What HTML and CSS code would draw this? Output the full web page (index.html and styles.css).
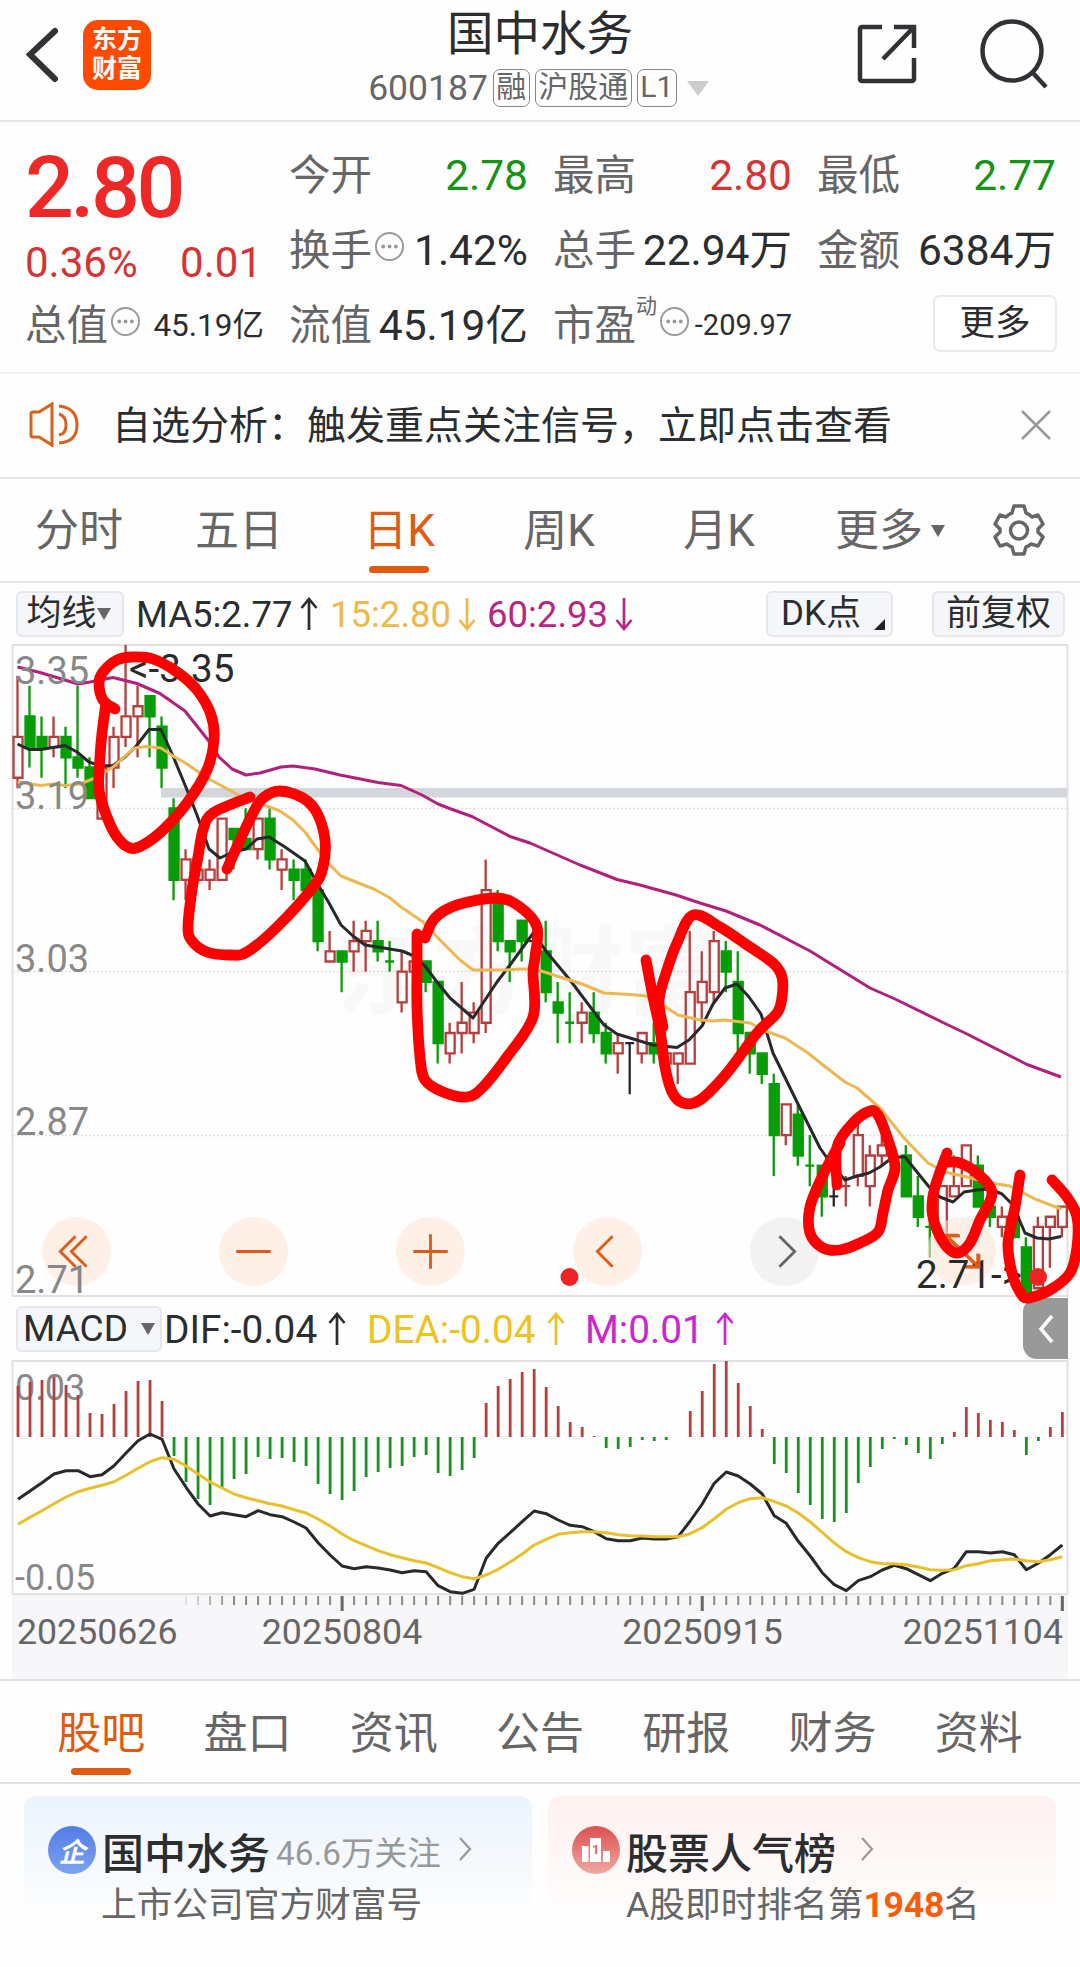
FILE: index.html
```html
<!DOCTYPE html>
<html lang="zh-CN">
<head>
<meta charset="utf-8">
<title>国中水务 600187</title>
<link rel="stylesheet" href="styles.css">
</head>
<body>
<header class="topbar">
  <svg class="back" width="36" height="58" viewBox="0 0 36 58"><path d="M31 5 6 28.500 31 53"/></svg>
  <div class="logo"><span>东方</span><span>财富</span></div>
  <div class="heading">
    <h1>国中水务</h1>
    <div class="code"><span class="num">600187</span><span class="tag">融</span><span class="tag">沪股通</span><span class="tag">L1</span><i class="tri tri-light"></i></div>
  </div>
  <svg class="share" width="62" height="62" viewBox="0 0 62 62"><path d="M25 4H5a2 2 0 0 0-2 2V56a2 2 0 0 0 2 2H55a2 2 0 0 0 2-2V35M37 4H57V25M57 4 26 36"/></svg>
  <svg class="search" width="70" height="74" viewBox="0 0 70 74"><circle cx="33" cy="34" r="29.500"/><path d="M53 55 67 70"/></svg>
</header>

<section class="quote">
  <div class="cell price">2.80</div>
  <div class="cell"><span class="label">今开</span><b class="down">2.78</b></div>
  <div class="cell"><span class="label">最高</span><b class="up">2.80</b></div>
  <div class="cell"><span class="label">最低</span><b class="down">2.77</b></div>
  <div class="cell change up"><span>0.36%</span><span>0.01</span></div>
  <div class="cell"><span class="label">换手<svg class="dots" viewBox="0 0 32 32"><circle class="ring" cx="16" cy="16" r="14"/><circle cx="9.5" cy="16" r="2"/><circle cx="16" cy="16" r="2"/><circle cx="22.5" cy="16" r="2"/></svg></span><b>1.42%</b></div>
  <div class="cell"><span class="label">总手</span><b>22.94万</b></div>
  <div class="cell"><span class="label">金额</span><b>6384万</b></div>
  <div class="cell"><span class="label">总值<svg class="dots" viewBox="0 0 32 32"><circle class="ring" cx="16" cy="16" r="14"/><circle cx="9.5" cy="16" r="2"/><circle cx="16" cy="16" r="2"/><circle cx="22.5" cy="16" r="2"/></svg></span><b class="small">45.19亿</b></div>
  <div class="cell"><span class="label">流值</span><b>45.19亿</b></div>
  <div class="cell"><span class="label">市盈<sup>动</sup><svg class="dots" viewBox="0 0 32 32"><circle class="ring" cx="16" cy="16" r="14"/><circle cx="9.5" cy="16" r="2"/><circle cx="16" cy="16" r="2"/><circle cx="22.5" cy="16" r="2"/></svg></span><b class="small ratio">-209.97</b></div>
  <div class="cell last"><button class="more">更多</button></div>
</section>

<section class="notice">
  <svg class="speaker" width="54" height="46" viewBox="0 0 54 46"><path d="M3 12Q3 10 5 10H11L24 2V43L11 35H5Q3 35 3 33ZM31 12Q38 14 38 23T31 33M31 4Q49 6 49 23T31 41"/></svg>
  <p>自选分析：触发重点关注信号，立即点击查看</p>
  <svg class="close" width="32" height="32" viewBox="0 0 32 32"><path d="M2 2 30 30M30 2 2 30"/></svg>
</section>

<nav class="periods">
  <span>分时</span><span>五日</span><span class="on">日K</span><span>周K</span><span>月K</span><span class="wide">更多<i class="tri"></i></span>
  <svg class="gear" width="54" height="54" viewBox="0 0 54 54"><path d="M22 3H32L34 10Q37 11 40 14L46 12 51 21 46 26V29L51 34 46 43 39 41Q37 43 34 44L32 51H22L20 44Q17 43 15 41L8 43 3 34 8 29V26L3 21 8 12 14 14Q17 11 20 10Z"/><circle cx="27" cy="27.500" r="8.500"/></svg>
</nav>

<section class="indicator">
  <span class="chip ma">均线<i class="tri"></i></span>
  <span class="val ma5">MA5:2.77<svg class="arrow" viewBox="0 0 18 34"><path d="M9 33V2M1.500 11 9 2 16.500 11"/></svg></span>
  <span class="val ma15">15:2.80<svg class="arrow" viewBox="0 0 18 34"><path d="M9 1V32M1.500 23 9 32 16.500 23"/></svg></span>
  <span class="val ma60">60:2.93<svg class="arrow" viewBox="0 0 18 34"><path d="M9 1V32M1.500 23 9 32 16.500 23"/></svg></span>
  <span class="chip dk">DK点<i class="corner"></i></span>
  <span class="chip adj">前复权</span>
</section>

<section class="kline">
  <svg class="plot" width="1080" height="654" viewBox="0 643 1080 654">
    <rect class="frame" x="12.500" y="645" width="1055" height="651"/>
    <text class="watermark" x="336" y="1006">东方财富</text>
    <path class="grid" d="M13 808.500H1067M13 971.500H1067M13 1135.500H1067"/>
    <rect class="gap-band" x="161" y="788" width="906" height="9.500"/>
    <g id="candles"></g>
    <polyline class="line-60" points="17.500,667 40,672.500 78,684 90,682 113,677.500 137,683.500 160,693.500 185,711 208,740 219,757 232,769 246,775 260,773 281,767 293,766 315,769 340,775 378,782.500 401,785.500 422,795 438,804 451,809 472,816.500 510,836.500 530,843 580,865 617,879.500 640,885 676,895 700,903 726,911 760,925 810,951 870,988 895,999 946,1024 965,1033 1027,1064.500 1061,1077"/>
    <polyline class="line-5" points="17.500,744 29,749.500 41,749.500 65,745.500 77,752 89,762 101,766 113,765.500 125,757 137,745 149,729.500 161,729.500 173,756 185,785 197,815 209,849 220,858 233,852 246,849 257,839 269,837 285,847 305,861 317,883 329,903 341,925 353,936 365,945 402,951 414,956 425,966 437,982 450,998 473,1018 485,1000 497,982 510,965 534,932 545,950 570,980 582,996 604,1025 617,1034 653,1045 677,1047.500 689,1040 702,1026 713,1004 725,988 737,984 749,997 761,1014 773,1053 797,1102 820,1148 832,1165 845,1180 857,1176 869,1173 880,1167 893,1157 905,1157 917,1172 930,1188 940,1197 953,1202 964,1192 977,1190 990,1189 1002,1194 1013,1205 1025,1233 1037,1238 1049,1239 1061,1236.500"/>
    <polyline class="line-15" points="17.500,782 41,785.500 53,784 65,785.500 80,784 95,778 113,767 134,748 146,746.500 161,748 173,756 187,764 207,778 222,786 240,796 280,811 293,820 305,832 318,850 330,865 341,876 361,884 374,889 390,898 401,907 423,922 440,940 460,960 473,970 505,970 520,969 535,969 560,977 582,984 604,993 630,994.500 646,996 664,1006 678,1015 700,1020 713,1021 725,1020 750,1023 768,1032 785,1038 808,1053 823,1065 845,1082 857,1088 880,1108 904,1138 928,1163 945,1172 967,1177 990,1183 1010,1186 1035,1199 1061,1209"/>
    <g class="scale"><text x="15" y="683.500">3.35</text><text x="15" y="808.500">3.19</text><text x="15" y="971.500">3.03</text><text x="15" y="1134.500">2.87</text></g>
    <text class="extreme" x="129" y="681.500">&lt;-3.35</text>
  </svg>
  <div class="controls">
    <span class="knob"><svg viewBox="0 0 68 68"><path d="M33 19 18 34 33 49M44 19 29 34 44 49"/></svg></span>
    <span class="knob"><svg viewBox="0 0 68 68"><path d="M17 34H51"/></svg></span>
    <span class="knob"><svg viewBox="0 0 68 68"><path d="M17 34H51M34 17V51"/></svg></span>
    <span class="knob"><svg viewBox="0 0 68 68"><path d="M39 19 24 34 39 49"/></svg></span>
    <span class="knob off"><svg viewBox="0 0 68 68"><path d="M29 19 44 34 29 49"/></svg></span>
    <span class="knob"><svg viewBox="0 0 68 68"><path d="M18 30V18H31M18 18 50 49M50 36V49H37"/></svg></span>
  </div>
  <svg class="marks" width="1080" height="654" viewBox="0 643 1080 654">
    <g class="scale"><text x="15" y="1293">2.71</text></g>
    <text class="extreme" x="916" y="1288">2.71-&gt;</text>
    <path class="resize" d="M947 1248V1236H960M947 1236 979 1267M979 1254V1267H966"/>
    <circle cx="569.500" cy="1277" r="9"/><circle cx="1038" cy="1277" r="9"/>
    <g id="strokes"></g>
  </svg>
</section>

<section class="indicator macd-bar">
  <span class="chip macd">MACD<i class="tri"></i></span>
  <span class="val dif">DIF:-0.04<svg class="arrow" viewBox="0 0 18 34"><path d="M9 33V2M1.500 11 9 2 16.500 11"/></svg></span>
  <span class="val dea">DEA:-0.04<svg class="arrow" viewBox="0 0 18 34"><path d="M9 33V2M1.500 11 9 2 16.500 11"/></svg></span>
  <span class="val m">M:0.01<svg class="arrow" viewBox="0 0 18 34"><path d="M9 33V2M1.500 11 9 2 16.500 11"/></svg></span>
  <span class="drawer"><svg width="18" height="30" viewBox="0 0 18 30"><path d="M15 2 4 15 15 28"/></svg></span>
</section>

<section class="macd-plot">
  <svg width="1080" height="319" viewBox="0 1360 1080 319">
    <rect class="axis-bg" x="12" y="1595" width="1056" height="84"/>
    <rect class="frame" x="12.500" y="1361" width="1055" height="233"/>
    <g class="scale macd-scale"><text x="15" y="1399.500">0.03</text><text x="15" y="1590">-0.05</text></g>
    <g id="histogram"></g>
    <polyline id="dif" class="line-5"/>
    <polyline id="dea" class="line-dea"/>
    <g id="ticks"></g>
    <g class="dates"><text x="17" y="1644">20250626</text><text x="342" y="1644" text-anchor="middle">20250804</text><text x="702.500" y="1644" text-anchor="middle">20250915</text><text x="1063" y="1644" text-anchor="end">20251104</text></g>
  </svg>
</section>

<nav class="sections"><span class="on">股吧</span><span>盘口</span><span>资讯</span><span>公告</span><span>研报</span><span>财务</span><span>资料</span></nav>

<section class="cards">
  <article class="card blue">
    <span class="badge">企</span>
    <div class="line"><strong>国中水务</strong><small>46.6万关注</small><svg width="14" height="24" viewBox="0 0 14 24"><path d="M2 1 12 12 2 23"/></svg></div>
    <p>上市公司官方财富号</p>
  </article>
  <article class="card pink">
    <span class="badge"><svg width="30" height="26" viewBox="0 0 30 26"><path d="M1 9H7.500V25H1ZM9 1H20V25H9ZM22 14H29V25H22Z"/><text x="11" y="17">1</text></svg></span>
    <div class="line"><strong>股票人气榜</strong><svg class="far" width="14" height="24" viewBox="0 0 14 24"><path d="M2 1 12 12 2 23"/></svg></div>
    <p>A股即时排名第<b>1948</b>名</p>
  </article>
</section>
<script src="chart.js"></script>
</body>
</html>
```
FILE: styles.css
```css
* { box-sizing: border-box; }
body { margin: 0; width: 1080px; height: 1967px; overflow: hidden; background: #fefefe; color: #2b2d2f; font-family: Roboto, "Noto Sans CJK SC", sans-serif; }
h1, p { margin: 0; font-weight: 400; }
svg { display: block; fill: none; flex: none; }
b { font-weight: 400; }
.tri { display: inline-block; border: 7px solid transparent; border-top: 12px solid #666; border-bottom: 0; }
.tri-light { border-width: 15px 11px 0; border-top-color: #ccc; }

.topbar { display: flex; height: 122px; border-bottom: 2px solid #e5e6e8; padding-left: 24px; }
.topbar svg { stroke: #303235; stroke-width: 4.5; }
.topbar .back { margin-top: 26px; stroke-width: 6; stroke-linecap: round; }
.logo { display: flex; flex-direction: column; align-items: center; justify-content: center; width: 68px; height: 70px; margin: 20px 0 0 23px; border-radius: 15px; background: #ff4a00; color: #fff; font-size: 25px; line-height: 29px; font-weight: 700; padding-bottom: 2px; }
.heading { width: 564px; margin-left: 107px; display: flex; flex-direction: column; align-items: center; }
.heading h1 { font-size: 46.500px; line-height: 68px; }
.code { display: flex; align-items: center; height: 40px; margin-left: -3px; color: #666; font-size: 30px; }
.code .num { font-size: 35.500px; margin-right: 5px; }
.tag { border: 1.500px solid #888; border-radius: 7px; height: 38px; line-height: 34px; padding: 0 2.500px; margin-right: 5px; }
.code .tri { margin-left: 5px; }
.share { margin: 23px 0 0 35px; }
.search { margin: 17px 0 0 60px; }

.quote { display: grid; grid-template-columns: repeat(4, 238px); gap: 0 26px; grid-auto-rows: 75px; height: 252px; padding: 15px 25px 0; border-bottom: 2px solid #f0f0f2; }
.cell { display: flex; align-items: center; justify-content: space-between; font-size: 42.500px; white-space: nowrap; line-height: 75px; padding-top: 1px; }
.cell > b { margin-right: -1px; }
.label { display: flex; align-items: center; color: #666; font-size: 41.500px; }
.label sup { align-self: flex-start; font-size: 21px; line-height: 37px; width: 21px; }
.dots { width: 31px; height: 31px; margin: -8px 0 0 2px; fill: #999; }
.ring { fill: none; stroke: #999; stroke-width: 2; }
.small { font-size: 31.500px; }
.cell > .ratio { margin-right: -1px; font-size: 29px; }
.up { color: #d63434; }
.down { color: #149414; }
.price { color: #ee2727; font-size: 86px; font-weight: 500; letter-spacing: -3.400px; padding-top: 25px; }
.change { font-size: 42px; padding: 25px 1px 0 0; }
.last { justify-content: flex-end; }
.more { width: 124px; height: 57px; margin: -4px -2px 0 0; border: 2px solid #e8eaed; border-radius: 7px; background: #fff; color: inherit; font: 35.500px/47px Roboto, "Noto Sans CJK SC", sans-serif; padding: 0; }

.notice { display: flex; align-items: center; height: 105px; padding-left: 28px; border-bottom: 2px solid #e7e8ea; }
.speaker { stroke: #d9601e; stroke-width: 3; margin-top: -2px; }
.notice p { width: 908px; margin: -8px 0 0 30px; font-size: 39px; }
.close { stroke: #999; stroke-width: 2.500; margin-top: -2px; }

.periods { display: flex; align-items: center; height: 104px; color: #666; font-size: 44px; border-bottom: 2px solid #e5e6e8; }
.periods span { position: relative; left: -1px; width: 160px; text-align: center; line-height: 106px; top: 1px; }
.periods .wide { width: 182px; padding-left: 0; }
.periods .tri { margin: 0 0 9px 8px; }
.on { color: #e05a10; }
.on::after { content: ""; position: absolute; left: calc(50% - 30px); bottom: 7px; width: 60px; height: 7px; border-radius: 4px; background: #e05a10; }
.periods .on::after { bottom: 11px; }
.gear { margin-left: 10px; stroke: #666; stroke-width: 3.500; stroke-linejoin: round; }

.indicator { display: flex; align-items: center; height: 60px; padding: 1px 0 0 16px; font-size: 36.500px; white-space: nowrap; }
.chip { display: flex; align-items: center; justify-content: center; height: 46px; font-size: 35px; line-height: 36px; padding-bottom: 0; background: #f5f6f9; border: 2px solid #e5e7eb; border-radius: 6px; position: relative; }
.val { display: flex; align-items: center; padding-top: 1px; }
.arrow { width: 18px; height: 34px; stroke: currentColor; stroke-width: 2.700; margin-left: 7px; }
.chip.ma { width: 108px; padding-right: 3px; }
.ma5 { width: 194px; margin-left: 12px; }
.ma15 { width: 157px; color: #efb94a; }
.ma60 { width: 279px; color: #b82681; }
.dk { width: 127px; padding-right: 17px; }
.corner { position: absolute; right: 6px; bottom: 5px; border-left: 11px solid transparent; border-bottom: 11px solid #222; }
.adj { width: 133px; margin-left: 39px; }

.kline { position: relative; height: 654px; }
.frame { stroke: #e2e2e4; stroke-width: 2; }
.watermark { font: 700 96px "Noto Sans CJK SC", sans-serif; fill: #f8f8f9; }
.grid { stroke: #dedede; stroke-width: 1.500; stroke-dasharray: 2 2; }
.gap-band { fill: #d3d6db; }
.line-5, .line-15, .line-60, .line-dea { stroke-width: 3; stroke-linejoin: round; fill: none; }
.line-5 { stroke: #28292b; }
.line-15 { stroke: #edb751; }
.line-60 { stroke: #b3207c; }
.line-dea { stroke: #e8c02c; }
.candle { stroke-width: 2.300; }
.candle.r { stroke: #b83e3d; fill: none; }
.candle.g { stroke: #069d06; fill: #069d06; }
.candle.k { stroke: #28292b; fill: none; }
.scale { font-size: 38px; fill: #888; }
.macd-scale { font-size: 36px; }
.extreme { font-size: 38.500px; fill: #292a2c; }
.controls { position: absolute; left: 42px; top: 574px; display: flex; gap: 108px; }
.knob { width: 69px; height: 69px; border-radius: 50%; background: rgba(255, 229, 214, 0.58); }
.knob svg, .resize { stroke: #dc5c18; stroke-width: 2.800; }
.knob.off { background: rgba(229, 229, 229, 0.5); }
.knob.off svg { stroke: #666; }
.marks { position: absolute; left: 0; top: 0; overflow: visible; z-index: 2; }
.marks circle { fill: #ee2424; }
.stroke { stroke: #fd0000; stroke-width: 10.800; stroke-linecap: round; stroke-linejoin: round; }

.macd-bar { height: 63px; padding-top: 0; font-size: 38.800px; }
.macd { width: 146px; font-size: 37px; }
.macd .tri { margin: 0 0 0 13px; }
.macd-bar .arrow { margin-left: 11px; }
.dif { width: 203px; margin-left: 2px; }
.dea { width: 218px; color: #ecc323; }
.m { width: 438px; color: #ce26ce; }
.macd-bar .m .arrow { margin-left: 12px; }
.drawer { display: flex; align-items: center; justify-content: center; width: 45px; height: 61px; border-radius: 14px 0 0 14px; background: #999; }
.drawer svg { stroke: #fff; stroke-width: 3.500; }
.macd-plot { height: 319px; }
.axis-bg { fill: #f7f7fa; }
.bar { stroke-width: 2.800; }
.bar.r { stroke: #b83e3d; }
.bar.g { stroke: #16941b; }
.tick { stroke: #888; stroke-width: 2; }
.tick.major { stroke: #666; stroke-width: 3; }
.dates { font-size: 35.700px; fill: #666; }

.sections { display: flex; height: 105px; padding: 0 28px; border-top: 2px solid #dfe0e2; border-bottom: 2px solid #dfe0e2; color: #666; font-size: 44px; }
.sections span { position: relative; flex: 1; text-align: center; line-height: 106px; }
.sections .on { color: #e05a10; }

.cards { display: flex; gap: 16px; padding: 12px 24px; }
.card { position: relative; width: 508px; height: 160px; border-radius: 12px; padding: 27px 0 0 78px; }
.blue { background: linear-gradient(#ebf4fd, #fefefe 78%); }
.pink { background: linear-gradient(#fff1f0, #fefefe 78%); }
.badge { position: absolute; left: 24px; top: 30px; width: 48px; height: 48px; border-radius: 50%; display: flex; align-items: center; justify-content: center; color: #fff; font: 700 27px "Noto Sans CJK SC", sans-serif; }
.blue .badge { background: linear-gradient(#527de8, #7ba4ee); font-style: italic; }
.pink .badge { background: linear-gradient(#dc4f50, #efaaa2); }
.badge path { fill: #fff; }
.badge text { fill: #dc6060; font: 700 13px Roboto, sans-serif; }
.line { display: flex; align-items: center; height: 60px; margin-top: -3px; }
.line strong { font-size: 42px; font-weight: 500; }
.line small { font-size: 33.300px; color: #999; margin-left: 6px; }
.line svg { stroke: #999; stroke-width: 2.200; margin: -2px 0 0 17px; }
.line svg.far { margin-left: 24px; }
.card p { font-size: 35.700px; line-height: 42px; margin: 4px 0 0 -1px; color: #666; white-space: nowrap; }
.card.pink p { margin-left: 0; }
.card p b { color: #f95d0c; font-weight: 700; letter-spacing: -0.300px; }
```
FILE: chart.js
```js
const NS = "http://www.w3.org/2000/svg";
const xAt = i => 17.5 + 12.004 * i;
const priceY = n => 645 + 10.21 * n;

function add(parent, tag, attrs) {
  const el = document.createElementNS(NS, tag);
  for (const k in attrs) el.setAttribute(k, attrs[k]);
  document.getElementById(parent).appendChild(el);
}

// Each candle: colour, then high, body top, body bottom, low, in cents below 3.35.
const candles = `r3,9,13,14 g4,7,10,12 g7,9,10,13 r7,9,10,11 g8,9,11,14 g4,11,12,13 g11,12,15,15 r12,12,17,17 r8,9,12,14 r0,7,9,10
r4,6,7,11 g5,5,7,11 g7,8,12,14 g15,16,23,25 r20,21,23,25 r22,22,23,23 r21,22,23,24 r17,17,23,23 g18,18,19,22 g16,19,20,20
r17,17,20,21 g16,17,21,22 r20,21,22,24 g21,22,23,25 g21,22,24,24 g24,24,29,30 r28,30,31,31 g30,30,31,34 r27,29,30,32 r27,28,29,32
g27,29,30,31 g29,31,31,32 r30,32,35,36 r31,31,32,32 g31,31,33,34 g33,33,39,41 r37,38,40,41 r33,37,38,40 r35,36,38,39 r21,24,37,38
g24,25,29,30 g29,29,30,33 g27,27,29,31 k28,29,29,29 g27,30,34,35 g33,35,36,39 g34,37,37,39 r35,36,37,39 g34,36,38,39 g37,38,40,41
r38,39,40,42 k39,39,39,44 r38,38,40,41 g37,39,40,41 r40,40,41,41 r40,40,41,43 r28,34,41,41 r30,33,35,37 r28,29,34,35 g29,30,32,34
g30,33,38,40 g38,38,40,42 g40,40,42,43 g42,43,48,52 r45,45,48,49 g45,46,50,51 g48,51,51,53 g51,51,54,56 k52,54,54,55 r52,53,53,55
r47,48,52,53 r49,50,53,55 r48,49,50,51 g50,50,50,50 g49,50,54,54 g52,54,56,57 g56,57,57,60 r53,53,58,58 r50,53,54,54 r49,49,53,53
g50,51,55,55 g54,55,56,57 r55,56,57,58 g55,56,58,58 g58,59,63.500,63.500 r56,57,63,63 r56,56,57,61 r55,55,57,58`.split(/\s+/);

candles.forEach((c, i) => {
  const x = xAt(i);
  const [hi, top, bottom, lo] = c.slice(1).split(",").map(v => priceY(+v));
  const body = bottom - top < 1 ? `M${x - 4.5} ${top}h9` : `M${x - 4} ${top}h9V${bottom}h-9Z`;
  const y2 = bottom - top < 1 ? top : bottom;
  add("candles", "path", { class: "candle " + c[0], d: `M${x} ${hi}V${top}${body}M${x} ${y2}V${lo}` });
});

const hist = [51,55,57,60,52,42,24,23,33,46,56,57,36,-19,-45,-62,-68,-50,-42,-37,-20,-22,-21,-25,-29,-47,-57,-63,-54,-40,-35,-31,-29,-20,-18,-36,-39,-33,-21,34,51,58,65,68,50,31,15,10,1,-11,-12,-10,-3,-4,-3,0,26,46,73,76,54,31,8,-27,-36,-56,-68,-82,-85,-76,-46,-30,-12,-2,-8,-16,-22,-7,5,30,24,17,15,7,-18,-4,10,25];
hist.forEach((h, i) => add("histogram", "path", { class: "bar " + (h > 0 ? "r" : "g"), d: `M${xAt(i) + 0.5} 1437v${-h}` }));

const dif = [448,423,398,372,362,362,380,374,347,309,272,252,268,357,412,462,498,488,494,500,482,494,500,516,534,578,615,648,656,650,654,660,668,662,665,707,725,730,718,625,580,548,515,483,491,510,526,530,545,566,572,572,564,567,567,560,513,462,400,366,378,402,432,497,520,574,618,668,704,722,692,680,660,646,656,674,692,670,655,605,605,609,605,614,659,640,614,585];
const dea = [523,502,482,461,441,425,415,406,395,376,355,335,323,328,348,372,396,414,432,443,452,461,468,479,489,507,528,552,572,587,602,614,623,632,639,653,668,680,686,675,658,636,612,585,568,553,548,545,545,548,554,557,558,560,560,560,551,533,506,478,458,446,443,455,468,489,516,547,579,605,623,635,641,641,644,651,659,661,659,647,641,632,629,627,632,635,629,620];
const trace = (id, data) => document.getElementById(id).setAttribute("points", data.map((v, i) => `${xAt(i) + 0.5},${(1350 + v / 3).toFixed(1)}`).join(" "));
trace("dif", dif);
trace("dea", dea);

for (let i = 14; i < 88; i++) {
  const major = i % 30 === 27;
  add("ticks", "path", { class: major ? "tick major" : "tick", d: `M${xAt(i) + 0.5} 1596v${major ? 15 : 9}`, opacity: Math.min(1, 0.2 + (i - 14) * 0.2) });
}

// Freehand pen strokes, smoothed through their sample points.
const strokes = [
  "115,709 103,700 99,683 103,672 117,660 133,657 153,659 177,672 197,690 211,715 214,740 207,770 187,803 163,830 143,845 130,848 117,837 107,817 99,790 100,757 102,733 106,703",
  "250,797 213,813 203,830 198,857 192,890 188,927 192,941 207,952 230,955 247,952 277,927 313,887 323,867 325,840 317,813 303,798 280,791 263,798 253,813 240,840 227,869",
  "425,938 435,918 457,905 497,898 520,907 537,927 535,957 533,973 533,1017 507,1057 483,1087 467,1097 443,1092 425,1080 420,1057 417,1007 417,967 417,934",
  "663,1027 659,1000 667,970 677,943 693,915 720,927 747,945 773,963 782,977 782,997 777,1013 757,1033 727,1073 700,1100 683,1103 672,1092 665,1067 660,1030 653,997 646,960",
  "837,1185 837,1147 853,1123 870,1111 878,1115 887,1137 895,1167 888,1190 883,1213 878,1232 860,1243 840,1250 823,1248 810,1233 810,1207 822,1177 840,1143",
  "947,1153 935,1187 932,1210 937,1230 947,1247 958,1253 970,1243 980,1220 992,1193 977,1173 960,1163 948,1162",
  "1020,1175 1015,1207 1008,1243 1012,1273 1020,1292 1028,1298 1050,1290 1070,1273 1077,1247 1077,1217 1067,1197 1052,1180"
];
strokes.forEach(s => {
  const p = s.split(" ").map(q => q.split(",").map(Number));
  let d = "M" + p[0];
  for (let i = 0; i < p.length - 1; i++) {
    const a = p[i - 1] || p[i], b = p[i], c = p[i + 1], e = p[i + 2] || c;
    d += `C${b[0] + (c[0] - a[0]) / 6} ${b[1] + (c[1] - a[1]) / 6} ${c[0] - (e[0] - b[0]) / 6} ${c[1] - (e[1] - b[1]) / 6} ${c[0]} ${c[1]}`;
  }
  add("strokes", "path", { class: "stroke", d });
});
```
